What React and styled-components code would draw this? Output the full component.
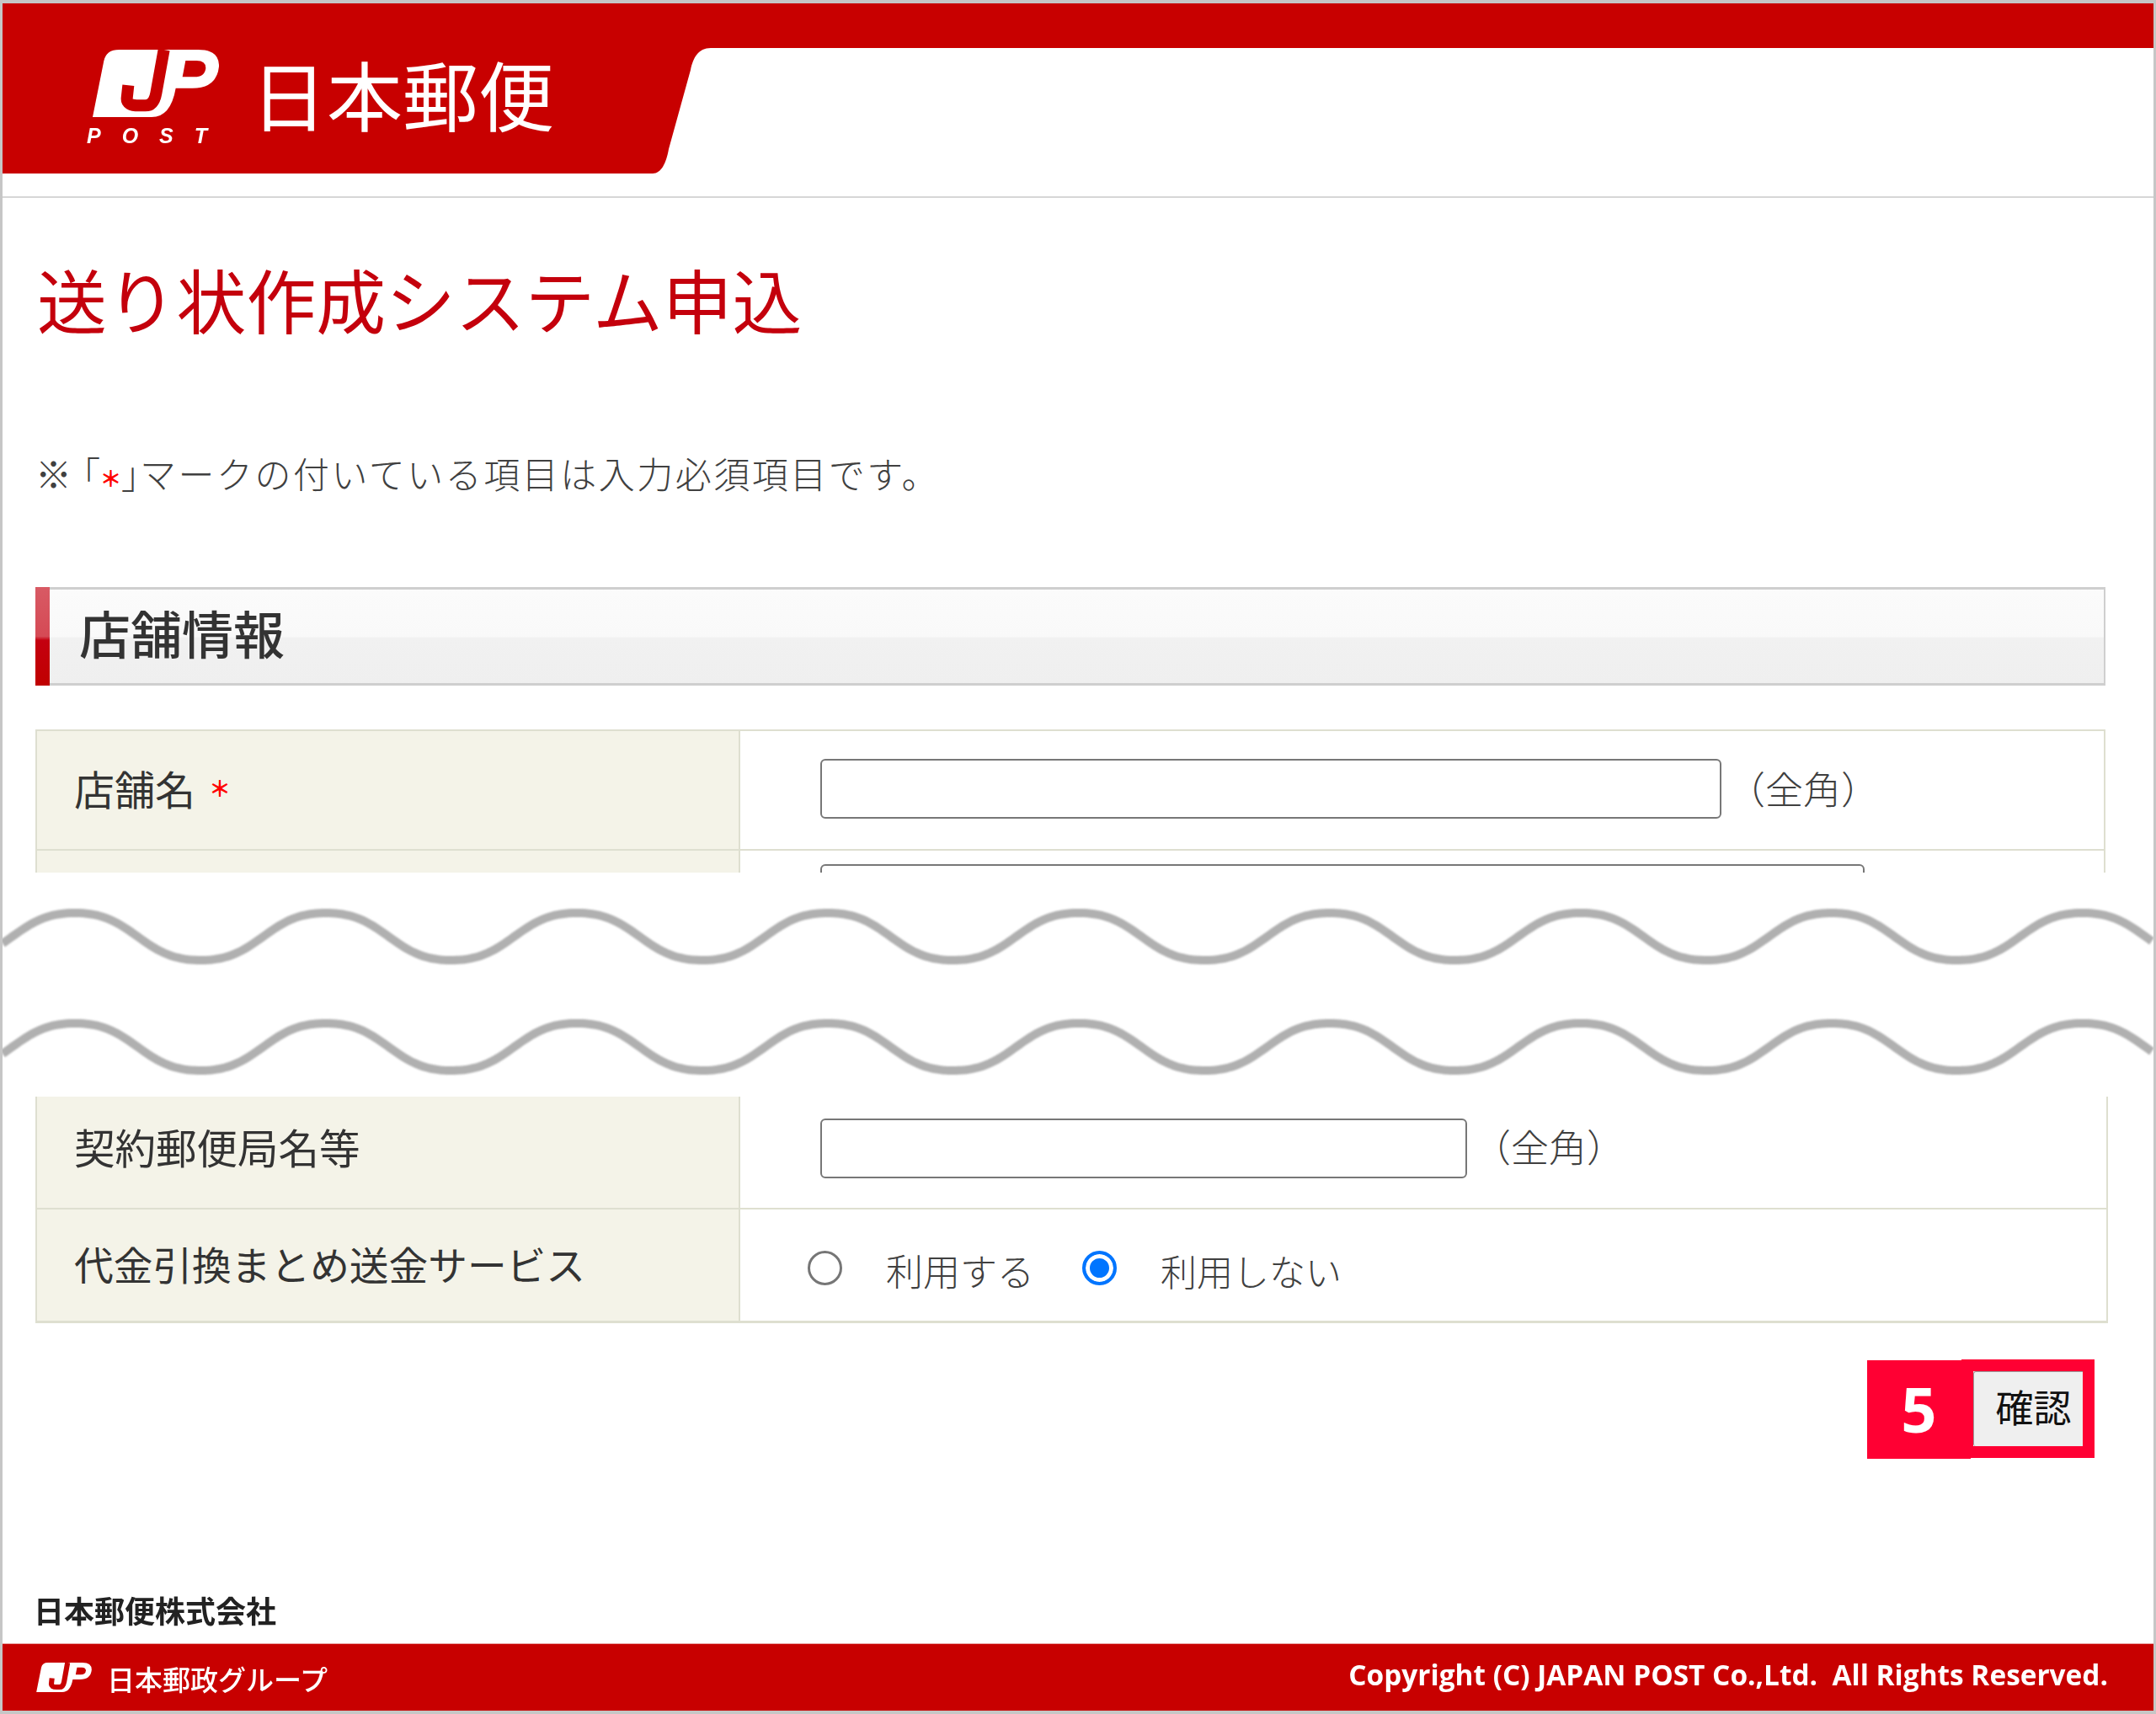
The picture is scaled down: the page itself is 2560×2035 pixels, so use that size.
import React from "react";
import styled, { createGlobalStyle } from "styled-components";

const JP_FONT = `"Noto Sans CJK JP", "Noto Sans", sans-serif`;
const RED = "#c80000";
const ROW_BORDER = "#dedfd0";

const Global = createGlobalStyle`
  html, body { margin: 0; padding: 0; background: #fff; }
  body { font-family: ${JP_FONT}; color: #3a3a3a; }
`;

const Page = styled.div`
  width: 2560px;
  height: 2035px;
  box-sizing: border-box;
  border: 4px solid #c6c6c6;
  border-left-width: 3px;
  border-right-width: 3px;
  display: flex;
  flex-direction: column;
  overflow: hidden;
  background: #fff;
`;

const Header = styled.header`
  display: flex;
  height: 231px;
  flex: none;
  box-sizing: border-box;
  border-bottom: 2px solid #d6d6d6;
  background: linear-gradient(${RED} 53px, #fff 53px);
  align-items: flex-start;
`;

const Brand = styled.div`
  width: 772px;
  height: 202px;
  background: ${RED};
  display: flex;
  align-items: flex-start;
  flex: none;
`;

const LogoBlock = styled.div`
  margin: 55px 0 0 107px;
  width: 150px;
  display: flex;
  flex-direction: column;
  filter: blur(0.6px);
`;

const PostWord = styled.span`
  font: italic bold 25px/20px "Liberation Sans", sans-serif;
  color: #fff;
  letter-spacing: 25px;
  margin: 12px 0 0 -7px;
  white-space: nowrap;
`;

const BrandName = styled.span`
  margin: 44px 0 0 38px;
  font-size: 90px;
  line-height: 124px;
  color: #fff;
  font-weight: 400;
  white-space: nowrap;
  filter: blur(0.5px);
`;

const Curve = styled.svg`
  display: block;
  flex: none;
`;

const Main = styled.main`
  flex: 1;
  padding: 0 57px 0 39px;
  display: flex;
  flex-direction: column;
`;

const Title = styled.h1`
  margin: 60px 0 0 2px;
  font-size: 82.8px;
  line-height: 118px;
  font-weight: 400;
  color: #c4000c;
  white-space: nowrap;
`;

const Note = styled.p`
  margin: 117px 0 0 0;
  font-size: 43px;
  line-height: 62px;
  font-weight: 300;
  color: #404040;
  white-space: nowrap;
`;

const NoteBracket = styled.span`
  font-feature-settings: "palt";
  margin: 0 ${(p) => p.$after || 0}px 0 ${(p) => p.$before || 0}px;
`;

const NoteTail = styled.span`
  letter-spacing: 2.5px;
`;

const Req = styled.span`
  color: #ff0000;
  font-size: 26px;
  font-weight: 700;
  vertical-align: 2px;
`;

const SectionHead = styled.h2`
  margin: 99px 0 0 0;
  height: 117px;
  box-sizing: border-box;
  display: flex;
  align-items: center;
  padding: 0 0 10px 52px;
  border-top: 3px solid #cfcfcf;
  border-bottom: 3px solid #cfcfcf;
  border-right: 2px solid #cfcfcf;
  position: relative;
  background: linear-gradient(#fbfbfb 0%, #f9f9f9 50%, #f1f1f1 52%, #efefef 100%);
  font-size: 61px;
  line-height: 1;
  font-weight: 500;
  color: #333;
  &::before {
    content: "";
    position: absolute;
    left: 0;
    top: -3px;
    bottom: -3px;
    width: 17px;
    background: linear-gradient(#d85a64 0%, #d54a55 50%, #c40010 54%, #c00000 100%);
  }
`;

const ClippedTable = styled.div`
  margin-top: 52px;
  height: 170px;
  overflow: hidden;
  border-top: 2px solid ${ROW_BORDER};
  box-sizing: border-box;
  border-left: 2px solid ${ROW_BORDER};
  border-right: 2px solid ${ROW_BORDER};
`;

const LowerTable = styled.div`
  width: 2461px;
  box-sizing: border-box;
  border-left: 2px solid ${ROW_BORDER};
  border-right: 2px solid ${ROW_BORDER};
  border-bottom: 3px solid ${ROW_BORDER};
`;

const Row = styled.div`
  display: grid;
  grid-template-columns: 835px 1fr;
  height: ${(p) => p.$h}px;
  box-sizing: border-box;
  border-bottom: ${(p) => (p.$last ? "none" : `2px solid ${ROW_BORDER}`)};
`;

const LabelCell = styled.div`
  background: #f4f3e8;
  border-right: 2px solid ${ROW_BORDER};
  display: flex;
  align-items: center;
  padding: 0 0 ${(p) => p.$lift || 0}px 44px;
  box-sizing: border-box;
  font-size: ${(p) => p.$size || 47}px;
  line-height: 1;
  color: #333;
  white-space: nowrap;
  gap: 16px;
`;

const RedMark = styled.span`
  color: #ff0000;
  font-size: 26px;
  font-weight: 700;
`;

const ValueCell = styled.div`
  display: flex;
  align-items: ${(p) => (p.$top ? "flex-start" : "center")};
  padding: ${(p) => p.$pad || "0 0 0 95px"};
  box-sizing: border-box;
`;

const TextBox = styled.input`
  width: ${(p) => p.$w}px;
  height: 71px;
  box-sizing: border-box;
  border: 2px solid #777;
  border-radius: 6px;
  background: #fff;
  padding: 0 8px;
  flex: none;
  outline: none;
`;

const Hint = styled.span`
  margin: 0 0 ${(p) => p.$lift || 2}px 7px;
  font-size: 45px;
  font-weight: 300;
  color: #404040;
  white-space: nowrap;
`;

const Radio = styled.input`
  appearance: none;
  width: 41px;
  height: 41px;
  margin: 0;
  flex: none;
  box-sizing: border-box;
  border: 3px solid #767676;
  border-radius: 50%;
  background: #fff;
  &:checked {
    border: 4px solid #0075ff;
    background: #0075ff;
    box-shadow: inset 0 0 0 5px #fff;
  }
`;

const RadioText = styled.span`
  font-size: ${(p) => p.$size}px;
  font-weight: 300;
  color: #404040;
  white-space: nowrap;
  margin: 6px ${(p) => p.$after || 0}px 0 ${(p) => p.$before}px;
`;

const RadioCell = styled(ValueCell)`
  padding: 6px 0 0 80px;
`;

const Break = styled.svg`
  display: block;
  flex: none;
  margin-left: -39px;
  width: 2554px;
  height: 266px;
`;

const ActionRow = styled.div`
  display: flex;
  justify-content: flex-end;
  align-items: flex-start;
  margin-top: 43px;
  padding-right: 13px;
`;

const StepBadge = styled.div`
  width: 123px;
  height: 117px;
  background: #ff0033;
  color: #fff;
  font: 700 74px/115px "Open Sans", sans-serif;
  text-align: center;
  margin-top: 1px;
  flex: none;
`;

const ButtonFrame = styled.div`
  border: 14px solid #ff0033;
  margin-left: -11px;
  flex: none;
  display: flex;
`;

const ConfirmButton = styled.button`
  width: 130px;
  height: 89px;
  box-sizing: border-box;
  border: none;
  border-top: 1px solid #999;
  border-left: 1px solid #999;
  border-radius: 3px 0 0 3px;
  background: #efefef;
  font-family: ${JP_FONT};
  font-size: 45px;
  line-height: 1;
  color: #111;
  padding: 0 0 7px 12px;
  white-space: nowrap;
`;

const Company = styled.div`
  margin: auto 0 18px -2px;
  font-size: 36px;
  line-height: 44px;
  font-weight: 700;
  color: #222;
  white-space: nowrap;
  filter: blur(0.6px);
`;

const Footer = styled.footer`
  flex: none;
  height: 80px;
  background: ${RED};
  border-top: 1px solid #e8a0a0;
  box-sizing: border-box;
  display: flex;
  align-items: center;
  justify-content: space-between;
  padding: 0 54px 0 39px;
  color: #fff;
`;

const GroupBrand = styled.div`
  display: flex;
  align-items: center;
  gap: 17px;
  filter: blur(0.6px);
`;

const GroupName = styled.span`
  font-size: 33px;
  line-height: 1;
  font-weight: 500;
  white-space: nowrap;
  margin-top: 4px;
`;

const Copyright = styled.span`
  font: 700 33.4px/1 "Open Sans", sans-serif;
  white-space: pre;
  margin-top: -6px;
  filter: blur(0.6px);
`;

function JpMark({ width, height }) {
  return (
    <svg width={width} height={height} viewBox="150 85 450 240" style={{ display: "block" }}>
      <path
        d="M150 325 L190 125 Q198 85 245 85 L525 85 Q602 85 600 145 Q592 222 505 222 L446 222 Q428 325 360 325 Z"
        fill="#fff"
      />
      <path
        d="M277 212 L272 258 Q270 284 315 284 L338 284 Q368 284 376 240 L404 85"
        fill="none"
        stroke={RED}
        strokeWidth="42"
      />
      <path d="M481 124 L470 182 L512 182 Q550 182 553 150 Q553 124 520 124 Z" fill={RED} />
    </svg>
  );
}

function wavePath(mid) {
  const amp = 29.5;
  const period = 298;
  let d = "";
  for (let x = 0; x <= 2554; x += 4) {
    const t = (2 * Math.PI * (x + 1 - 87)) / period;
    const y = mid - amp * (Math.cos(t) - 0.05 * Math.cos(3 * t));
    d += `${x === 0 ? "M" : "L"}${x} ${y.toFixed(1)} `;
  }
  return d;
}

export default function App() {
  return (
    <Page>
      <Global />
      <Header>
        <Brand>
          <LogoBlock>
            <JpMark width={150} height={80} />
            <PostWord>POST</PostWord>
          </LogoBlock>
          <BrandName>日本郵便</BrandName>
        </Brand>
        <Curve width="75" height="202" viewBox="0 0 75 202">
          <path d="M0 0 L75 0 L75 53 L69 53 C54 53 48 65 45 79 L19 173 C16 190 10 202 0 202 Z" fill={RED} />
        </Curve>
      </Header>
      <Main>
        <Title>送り状作成システム申込</Title>
        <Note>
          ※<NoteBracket $before={12}>「</NoteBracket>
          <Req>＊</Req>
          <NoteBracket>」</NoteBracket>
          <NoteTail>マークの付いている項目は入力必須項目です。</NoteTail>
        </Note>
        <SectionHead>店舗情報</SectionHead>
        <ClippedTable>
          <Row $h={142}>
            <LabelCell $lift={6} $size={48}>
              店舗名<RedMark>＊</RedMark>
            </LabelCell>
            <ValueCell $pad="0 0 3px 95px">
              <TextBox $w={1070} />
              <Hint>（全角）</Hint>
            </ValueCell>
          </Row>
          <Row $h={142} $last>
            <LabelCell />
            <ValueCell $top $pad="16px 0 0 95px">
              <TextBox $w={1240} />
            </ValueCell>
          </Row>
        </ClippedTable>
        <Break viewBox="0 0 2554 266">
          <g style={{ filter: "blur(1.2px)" }}>
            <path d={wavePath(76)} fill="none" stroke="#b0b0b0" strokeWidth="10" />
            <path d={wavePath(207)} fill="none" stroke="#b0b0b0" strokeWidth="10" />
          </g>
        </Break>
        <LowerTable>
          <Row $h={134}>
            <LabelCell $lift={13} $size={48.5}>契約郵便局名等</LabelCell>
            <ValueCell $pad="0 0 10px 95px">
              <TextBox $w={768} />
              <Hint $lift={6}>（全角）</Hint>
            </ValueCell>
          </Row>
          <Row $h={132} $last>
            <LabelCell $lift={3} $size={46.7}>代金引換まとめ送金サービス</LabelCell>
            <RadioCell>
              <Radio type="radio" name="cod" />
              <RadioText $size={44} $before={52} $after={57}>利用する</RadioText>
              <Radio type="radio" name="cod" defaultChecked />
              <RadioText $size={43} $before={52}>利用しない</RadioText>
            </RadioCell>
          </Row>
        </LowerTable>
        <ActionRow>
          <StepBadge>5</StepBadge>
          <ButtonFrame>
            <ConfirmButton>確認</ConfirmButton>
          </ButtonFrame>
        </ActionRow>
        <Company>日本郵便株式会社</Company>
      </Main>
      <Footer>
        <GroupBrand>
          <JpMark width={68} height={35} />
          <GroupName>日本郵政グループ</GroupName>
        </GroupBrand>
        <Copyright>{"Copyright (C) JAPAN POST Co.,Ltd.  All Rights Reserved."}</Copyright>
      </Footer>
    </Page>
  );
}
